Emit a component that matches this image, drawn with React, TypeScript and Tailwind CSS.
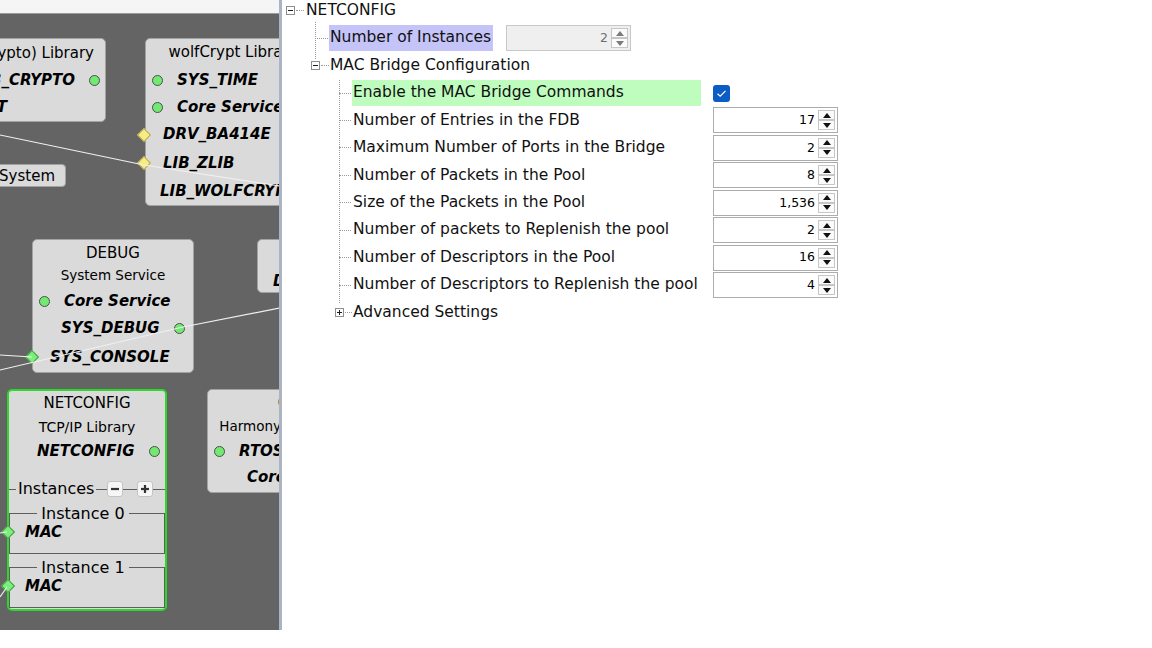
import React from "react";

type Kind = "yellow" | "green";

const ROW = "relative flex h-[27.45px] items-center";
const ITEM = "whitespace-nowrap text-[15px] font-bold italic leading-none";
const TITLE = "flex items-center justify-center whitespace-nowrap text-[15px] leading-none";

function Dot() {
  return <span className="block h-[11px] w-[11px] shrink-0 rounded-full border border-[#4e4e4e] bg-[#72ea72]" />;
}

function Diamond({ kind, className }: { kind: Kind; className: string }) {
  const fill = kind === "yellow" ? "border-[#b3a44c] bg-[#f6ec86]" : "border-[#3f9a3f] bg-[#7cee7c]";
  return <span className={`absolute block h-[10px] w-[10px] rotate-45 border ${fill} ${className}`} />;
}

function Node({ className, children }: { className: string; children: React.ReactNode }) {
  return (
    <div className={`absolute flex flex-col rounded-[5px] bg-[#dadada] pt-[2px] text-black ${className}`}>{children}</div>
  );
}

function SmallBtn({ plus }: { plus?: boolean }) {
  return (
    <span className="flex h-[16px] w-[16px] shrink-0 items-center justify-center rounded-[3px] border border-[#c4c4c4] bg-[#f6f6f6]">
      <svg width="10" height="10" viewBox="0 0 10 10">
        <path d="M1 5h8" stroke="#333" strokeWidth="2.2" />
        {plus && <path d="M5 1v8" stroke="#333" strokeWidth="2.2" />}
      </svg>
    </span>
  );
}

function InstanceGroup({ label }: { label: string }) {
  return (
    <div className="relative mt-[13px] flex flex-col border border-[#5e5e5e] pb-[12px]">
      <span className="-mt-[10px] mr-[8px] self-center bg-[#dadada] px-[4px] text-[16px] leading-[19px]">{label}</span>
      <div className="relative flex h-[18px] items-center pl-[15px]">
        <Diamond kind="green" className="left-[-7px]" />
        <span className={ITEM}>MAC</span>
      </div>
    </div>
  );
}

function Canvas() {
  return (
    <div className="relative flex-1 overflow-hidden bg-[#646464]">
      {/* Crypto library, cut at the left edge */}
      <Node className="left-[-60px] top-[24px] h-[84px] w-[166px] border border-[#a2a2a2]">
        <div className="flex h-[26px] items-center justify-end pr-[11px] text-[15px] leading-none whitespace-nowrap">
          Cryptographic (Crypto) Library
        </div>
        <div className="flex h-[30px] items-center justify-end gap-[14px] pr-[5px]">
          <span className={ITEM}>LIB_CRYPTO</span>
          <Dot />
        </div>
        <div className="flex h-[28px] items-center justify-end pr-[98px]">
          <span className={ITEM}>LIB_WOLFCRYPT</span>
        </div>
      </Node>

      {/* wolfCrypt */}
      <Node className="left-[145px] top-[24px] h-[168px] w-[176px] border border-[#a2a2a2]">
        <div className={`${TITLE} h-[23px]`}>wolfCrypt Library</div>
        <div className="mt-[3px] flex h-[29px] items-center gap-[14px] pl-[6px]">
          <Dot />
          <span className={ITEM}>SYS_TIME</span>
        </div>
        <div className="flex h-[27px] items-center gap-[14px] pl-[6px]">
          <Dot />
          <span className={ITEM}>Core Service</span>
        </div>
        <div className="relative flex h-[28px] items-center pl-[17px]">
          <Diamond kind="yellow" className="left-[-7px]" />
          <span className={ITEM}>DRV_BA414E</span>
        </div>
        <div className="relative flex h-[30px] items-center pl-[17px]">
          <Diamond kind="yellow" className="left-[-7px]" />
          <span className={ITEM}>LIB_ZLIB</span>
        </div>
        <div className="flex h-[28px] items-center pl-[14px]">
          <span className={ITEM}>LIB_WOLFCRYPT</span>
        </div>
      </Node>

      {/* System button */}
      <div className="absolute left-[-40px] top-[150px] flex h-[23px] w-[106px] items-center justify-end rounded-[4px] border border-[#a2a2a2] bg-[#dadada] pr-[10px] pt-px text-[15px] leading-none">
        System
      </div>

      {/* DEBUG */}
      <Node className="left-[32px] top-[225px] h-[134px] w-[162px] border border-[#a2a2a2]">
        <div className={`${TITLE} h-[22px]`}>DEBUG</div>
        <div className="flex h-[24px] items-center justify-center whitespace-nowrap text-[13.5px] leading-none">System Service</div>
        <div className="flex h-[27px] items-center gap-[14px] pl-[6px]">
          <Dot />
          <span className={ITEM}>Core Service</span>
        </div>
        <div className="flex h-[27px] items-center gap-[14px] pl-[28px]">
          <span className={ITEM}>SYS_DEBUG</span>
          <Dot />
        </div>
        <div className="relative flex h-[30px] items-center pl-[17px]">
          <Diamond kind="green" className="left-[-6px]" />
          <span className={ITEM}>SYS_CONSOLE</span>
        </div>
      </Node>

      {/* partly hidden box on the right */}
      <Node className="left-[257px] top-[225px] h-[54px] w-[160px] border border-[#a2a2a2]">
        <div className={`${TITLE} h-[30px]`}>TIME</div>
        <div className="flex h-[22px] items-center pl-[15px]">
          <span className={ITEM}>DRV_TIME</span>
        </div>
      </Node>

      {/* NETCONFIG, selected */}
      <Node className="left-[7px] top-[375px] h-[222px] w-[160px] border-2 border-[#2bd82b]">
        <div className={`${TITLE} h-[20px]`}>NETCONFIG</div>
        <div className="flex h-[28px] items-center justify-center whitespace-nowrap text-[14px] leading-none">TCP/IP Library</div>
        <div className="flex h-[20px] items-center gap-[14px] pl-[28px]">
          <span className={ITEM}>NETCONFIG</span>
          <Dot />
        </div>
        <div className="mt-[17px] flex h-[22px] items-center">
          <span className="h-px w-[7px] bg-[#5e5e5e]" />
          <span className="px-[2px] text-[16px] leading-none">Instances</span>
          <span className="h-px w-[11px] bg-[#5e5e5e]" />
          <SmallBtn />
          <span className="h-px w-[14px] bg-[#5e5e5e]" />
          <SmallBtn plus />
          <span className="h-px flex-1 bg-[#5e5e5e]" />
        </div>
        <InstanceGroup label="Instance 0" />
        <InstanceGroup label="Instance 1" />
      </Node>

      {/* Harmony Core */}
      <Node className="left-[207px] top-[375px] h-[104px] w-[176px] border border-[#a2a2a2]">
        <div className={`${TITLE} h-[22px]`}>Core</div>
        <div className="flex h-[26px] items-center justify-center whitespace-nowrap text-[13.5px] leading-none">Harmony Core Service</div>
        <div className="flex h-[22px] items-center gap-[14px] pl-[6px]">
          <Dot />
          <span className={ITEM}>RTOS</span>
        </div>
        <div className="flex h-[30px] items-center pl-[39px]">
          <span className={ITEM}>Core Service</span>
        </div>
      </Node>

      <svg className="pointer-events-none absolute inset-0 h-full w-full" fill="none" stroke="#f0f0f0" strokeWidth="1.2">
        <polyline points="0,121 144,151 280,172" />
        <polyline points="0,356 183,313 280,294" />
        <polyline points="0,341 32,343" />
        <polyline points="0,519 7,518" />
        <polyline points="0,583 7,573" />
      </svg>
    </div>
  );
}

function Expander({ open }: { open?: boolean }) {
  return (
    <span className="flex h-[9px] w-[9px] shrink-0 items-center justify-center border border-[#8e8e8e] bg-white">
      <svg width="7" height="7" viewBox="0 0 7 7">
        <path d="M1 3.5h5" stroke="#1e1e1e" strokeWidth="1" />
        {!open && <path d="M3.5 1v5" stroke="#1e1e1e" strokeWidth="1" />}
      </svg>
    </span>
  );
}

function Arrow({ up, muted }: { up?: boolean; muted?: boolean }) {
  return (
    <span className="flex flex-1 items-center justify-center border border-[#c6c6c6] bg-[#fbfbfb]">
      <svg width="8" height="5" viewBox="0 0 8 5">
        <path d={up ? "M0 5L4 0L8 5Z" : "M0 0L4 5L8 0Z"} fill={muted ? "#7a7a7a" : "#111"} />
      </svg>
    </span>
  );
}

function Spinner({ value, disabled }: { value: string; disabled?: boolean }) {
  return (
    <div
      className={`flex h-[26px] w-[125px] shrink-0 border ${
        disabled ? "border-[#c8c8c8] bg-[#efefef] text-[#707070]" : "border-[#acacac] bg-white text-black"
      }`}
    >
      <span className="flex flex-1 items-center justify-end pr-[3px] text-[12.5px] leading-none">{value}</span>
      <div className="my-[2px] mr-[2px] flex w-[17px] flex-col">
        <Arrow up muted={disabled} />
        <Arrow muted={disabled} />
      </div>
    </div>
  );
}

const settings: [string, string][] = [
  ["Number of Entries in the FDB", "17"],
  ["Maximum Number of Ports in the Bridge", "2"],
  ["Number of Packets in the Pool", "8"],
  ["Size of the Packets in the Pool", "1,536"],
  ["Number of packets to Replenish the pool", "2"],
  ["Number of Descriptors in the Pool", "16"],
  ["Number of Descriptors to Replenish the pool", "4"],
];

function Tree() {
  return (
    <div className="relative -mt-[3px] flex flex-1 flex-col text-[15.5px] leading-none text-[#111]">
      {/* guide lines */}
      <span className="absolute left-[33px] top-[25px] h-[37px] border-l border-dotted border-[#9a9a9a]" />
      <span className="absolute left-[57px] top-[83px] h-[223px] border-l border-dotted border-[#9a9a9a]" />

      <div className={`${ROW} pl-[4px]`}>
        <Expander open />
        <span className="ml-px w-[8px] border-t border-dotted border-[#9a9a9a]" />
        <span className="ml-[2px]">NETCONFIG</span>
      </div>

      <div className={`${ROW} pl-[33px]`}>
        <span className="w-[13px] border-t border-dotted border-[#9a9a9a]" />
        <span className="ml-px flex h-[26px] w-[164px] items-center bg-[#c4c4f8] pl-px">Number of Instances</span>
        <span className="ml-[13px]">
          <Spinner value="2" disabled />
        </span>
      </div>

      <div className={`${ROW} pl-[29px]`}>
        <Expander open />
        <span className="ml-px w-[8px] border-t border-dotted border-[#9a9a9a]" />
        <span className="ml-px">MAC Bridge Configuration</span>
      </div>

      <div className={`${ROW} pl-[57px]`}>
        <span className="w-[12px] border-t border-dotted border-[#9a9a9a]" />
        <span className="ml-px flex h-[26px] w-[349px] items-center bg-[#bffdbf] pl-px">Enable the MAC Bridge Commands</span>
        <span className="ml-[12px] flex h-[17px] w-[17px] items-center justify-center rounded-[3px] bg-[#0b5cc5]">
          <svg width="11" height="9" viewBox="0 0 11 9">
            <path d="M1.5 4.8L4.2 7.2L9.5 1.8" stroke="#fff" strokeWidth="1.2" fill="none" />
          </svg>
        </span>
      </div>

      {settings.map(([label, value]) => (
        <div key={label} className={`${ROW} pl-[57px]`}>
          <span className="w-[12px] border-t border-dotted border-[#9a9a9a]" />
          <span className="ml-px flex h-[26px] w-[349px] items-center pl-px">{label}</span>
          <span className="ml-[12px]">
            <Spinner value={value} />
          </span>
        </div>
      ))}

      <div className={`${ROW} pl-[53px]`}>
        <Expander />
        <span className="ml-px w-[7px] border-t border-dotted border-[#9a9a9a]" />
        <span className="ml-px">Advanced Settings</span>
      </div>
    </div>
  );
}

export default function App() {
  return (
    <div className="flex h-[648px] w-[1152px] items-start overflow-hidden bg-white font-['DejaVu_Sans',Verdana,sans-serif]">
      <div className="flex h-[630px] w-[282px] shrink-0 flex-col border-r-[3px] border-[#aab4c4]">
        <div className="h-[14px] border-b border-[#9c9c9c] bg-[#f5f5f5]" />
        <Canvas />
      </div>
      <Tree />
    </div>
  );
}
